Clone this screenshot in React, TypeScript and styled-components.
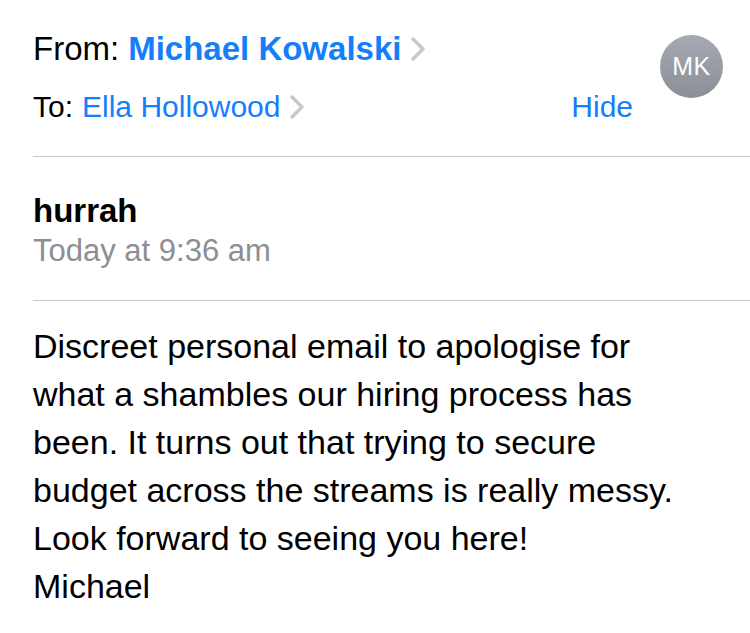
import React from "react";
import styled, { createGlobalStyle } from "styled-components";

const Global = createGlobalStyle`
  html, body { margin: 0; padding: 0; background: #fff; }
  body { font-family: "Liberation Sans", Arial, sans-serif; -webkit-font-smoothing: antialiased; }
`;

const Page = styled.div`
  width: 750px;
  height: 633px;
  overflow: hidden;
  padding-left: 33px;
  box-sizing: border-box;
  background: #fff;
  color: #000;
`;

const Header = styled.div`
  display: flex;
  align-items: flex-start;
  padding: 29px 27px 0 0;
  height: 156px;
  box-sizing: border-box;
`;

const HeaderLines = styled.div`
  flex: 1;
  display: flex;
  flex-direction: column;
`;

const AddrRow = styled.div<{ $size: number; $mt: number }>`
  display: flex;
  align-items: baseline;
  font-size: ${(p) => p.$size}px;
  line-height: 40px;
  margin-top: ${(p) => p.$mt}px;
`;

const Label = styled.span`
  color: #000;
  margin-right: 9px;
`;

const Name = styled.span<{ $bold?: boolean }>`
  color: #147efb;
  font-weight: ${(p) => (p.$bold ? 700 : 400)};
`;

const Chevron = styled.svg`
  margin-left: 9px;
  align-self: center;
  flex: none;
`;

const Hide = styled.span`
  margin-left: auto;
  color: #147efb;
`;

const Avatar = styled.div`
  width: 63px;
  height: 63px;
  border-radius: 50%;
  margin-left: 27px;
  margin-top: 6px;
  flex: none;
  background: linear-gradient(#a6a9b1, #8c8f97);
  color: #fff;
  display: flex;
  align-items: center;
  justify-content: center;
  font-size: 25px;
  letter-spacing: 0.5px;
`;

const Divider = styled.div`
  height: 1px;
  background: #c8c7cc;
`;

const Subject = styled.div`
  padding: 34px 0 0;
  height: 143px;
  box-sizing: border-box;
`;

const Title = styled.div`
  font-size: 33px;
  font-weight: 700;
  line-height: 40px;
`;

const DateLine = styled.div`
  font-size: 31px;
  color: #8e8e93;
  line-height: 40px;
`;

const Body = styled.div`
  padding-top: 21px;
  font-size: 34px;
  line-height: 48px;
  white-space: pre-line;
`;

const Chev = () => (
  <Chevron width="16" height="26" viewBox="0 0 16 26">
    <path d="M3 3 L13 13 L3 23" fill="none" stroke="#c7c7cc" strokeWidth="3.4" strokeLinecap="round" strokeLinejoin="round" />
  </Chevron>
);

export default function App() {
  return (
    <Page>
      <Global />
      <Header>
        <HeaderLines>
          <AddrRow $size={33} $mt={0}>
            <Label>From:</Label>
            <Name $bold>Michael Kowalski</Name>
            <Chev />
          </AddrRow>
          <AddrRow $size={30} $mt={18}>
            <Label>To:</Label>
            <Name>Ella Hollowood</Name>
            <Chev />
            <Hide>Hide</Hide>
          </AddrRow>
        </HeaderLines>
        <Avatar>MK</Avatar>
      </Header>
      <Divider />
      <Subject>
        <Title>hurrah</Title>
        <DateLine>Today at 9:36 am</DateLine>
      </Subject>
      <Divider />
      <Body>
        {"Discreet personal email to apologise for\nwhat a shambles our hiring process has\nbeen. It turns out that trying to secure\nbudget across the streams is really messy.\nLook forward to seeing you here!\nMichael"}
      </Body>
    </Page>
  );
}
